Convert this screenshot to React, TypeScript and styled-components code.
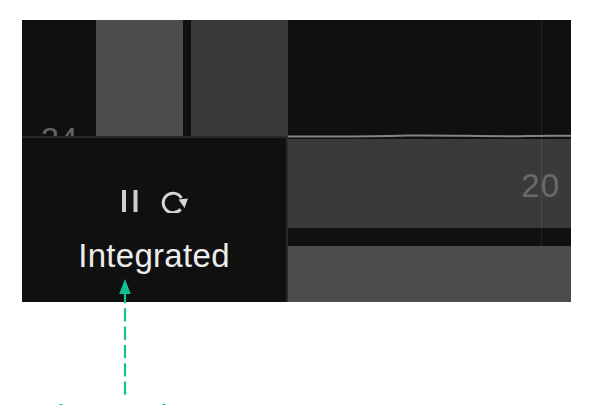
import * as React from "react";
import styled, { createGlobalStyle } from "styled-components";

const GlobalStyle = createGlobalStyle`
  html, body {
    margin: 0;
    padding: 0;
    background: #fff;
    font-family: "Liberation Sans", Arial, sans-serif;
  }
`;

export default function App() {
  return (
    <Page>
      <GlobalStyle />
      <Panel>
        <TopLeft>
          <Hour>
            <HourLabel>24</HourLabel>
          </Hour>
          <Bar $tone="light" $width={87} />
          <Bar $tone="dark" $width={97} />
        </TopLeft>
        <TopRight>
          <svg width="283" height="4" viewBox="0 0 283 4" fill="none">
            <path
              d="M0 2.4C40 2.8 80 2.8 120 1.6C160 1 200 2.8 240 2C256 1.6 270 1.8 283 1.8"
              stroke="#858585"
              strokeWidth="2"
            />
          </svg>
        </TopRight>
        <Controls>
          <Icons>
            <svg width="18" height="24" viewBox="0 0 18 24" fill="none">
              <path d="M3 1v22M14.5 1v22" stroke="#cfcfcf" strokeWidth="4" />
            </svg>
            <svg width="27" height="24" viewBox="0 0 27 24" fill="none">
              <path d="M19.6 20.2A9.8 9.8 0 1 1 20.5 9.1" stroke="#d6d6d6" strokeWidth="3" />
              <path d="M17.5 10.5L27 9.5L23.5 19z" fill="#d6d6d6" />
            </svg>
          </Icons>
          <Mode>Integrated</Mode>
        </Controls>
        <Tracks>
          <Track $tone="dark" $height={89}>
            <TrackValue>20</TrackValue>
          </Track>
          <TrackGap />
          <Track $tone="light" $height={56} />
        </Tracks>
        <Guide />
      </Panel>
      <Pointer>
        <svg width="16" height="118" viewBox="0 0 16 118" fill="none">
          <path d="M8 0l5.8 15H2.2z" fill="#10c193" />
          <path d="M8 11v105" stroke="#10c193" strokeWidth="2.2" strokeDasharray="13.3 5" />
        </svg>
      </Pointer>
      <Caption>Colour mode</Caption>
    </Page>
  );
}

const Page = styled.div`
  position: relative;
  width: 598px;
  height: 405px;
  padding: 20px 27px 0 22px;
  box-sizing: border-box;
  overflow: hidden;
`;

const Panel = styled.div`
  position: relative;
  display: grid;
  grid-template-columns: 266px 283px;
  grid-template-rows: 116px 166px;
  height: 282px;
  background: #101010;
`;

const TopLeft = styled.div`
  display: flex;
  gap: 8px;
  overflow: hidden;
`;

const Hour = styled.div`
  width: 66px;
  position: relative;
`;

const HourLabel = styled.span`
  position: absolute;
  left: 19px;
  top: 101px;
  font-size: 32px;
  line-height: 36px;
  letter-spacing: 1px;
  color: #666;
`;

const Bar = styled.div<{ $tone: "light" | "dark"; $width: number }>`
  width: ${(p) => p.$width}px;
  background: ${(p) => (p.$tone === "light" ? "#4c4c4c" : "#3a3a3a")};
`;

const TopRight = styled.div`
  display: flex;
  align-items: flex-end;
  height: 118px;
  line-height: 0;
`;

const Controls = styled.div`
  display: flex;
  flex-direction: column;
  align-items: center;
  padding-top: 51px;
  border-top: 2px solid #2a2a2a;
  border-right: 2px solid #2a2a2a;
`;

const Icons = styled.div`
  display: flex;
  gap: 22px;
  align-items: center;
  height: 24px;
`;

const Mode = styled.div`
  margin-top: 25px;
  font-size: 33px;
  line-height: 36px;
  letter-spacing: 0.3px;
  color: #ececec;
`;

const Tracks = styled.div`
  display: flex;
  flex-direction: column;
  padding-top: 3px;
`;

const Track = styled.div<{ $tone: "light" | "dark"; $height: number }>`
  display: flex;
  align-items: center;
  justify-content: flex-end;
  height: ${(p) => p.$height}px;
  padding: 5px 11px 0 0;
  box-sizing: border-box;
  background: ${(p) => (p.$tone === "light" ? "#4c4c4c" : "#3a3a3a")};
`;

const TrackValue = styled.span`
  font-size: 33px;
  line-height: 36px;
  letter-spacing: 1px;
  color: #6a6a6a;
`;

const TrackGap = styled.div`
  height: 18px;
`;

const Guide = styled.div`
  position: absolute;
  left: 519px;
  top: 0;
  width: 1px;
  height: 226px;
  background: rgba(255, 255, 255, 0.08);
`;

const Pointer = styled.div`
  position: absolute;
  left: 117px;
  top: 279px;
  line-height: 0;
`;

const Caption = styled.div`
  position: absolute;
  left: 22px;
  top: 398px;
  font-size: 28px;
  line-height: 34px;
  color: #10c193;
  white-space: nowrap;
`;
